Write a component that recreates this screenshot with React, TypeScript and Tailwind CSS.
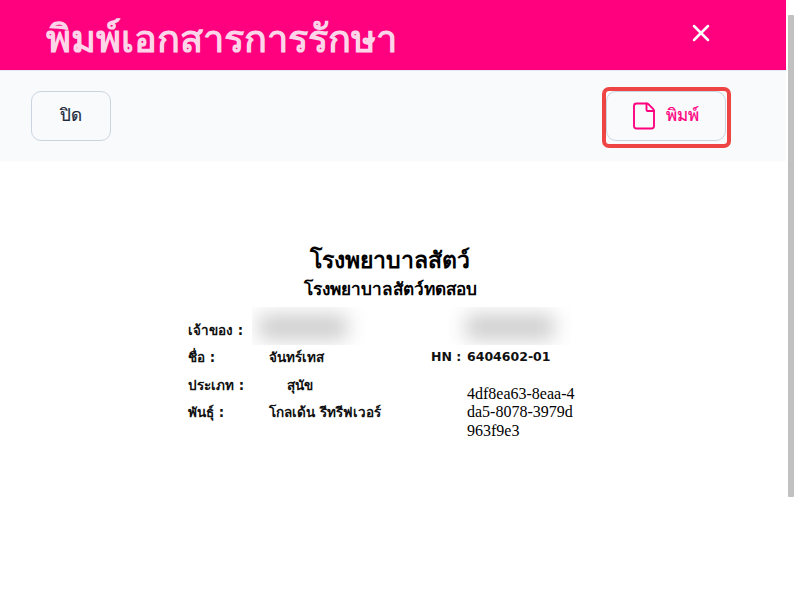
import { X, File } from "lucide-react";

const body = { fontFamily: "'DejaVu Sans', 'Noto Sans', sans-serif" };

function Row({ label, value, indent }: { label: string; value: string; indent?: boolean }) {
  return (
    <div className="flex items-start">
      <span className="w-[81px] shrink-0 font-bold">{label}</span>
      <span className={`font-bold ${indent ? "pl-[18px]" : ""}`}>{value}</span>
    </div>
  );
}

export default function App() {
  return (
    <div className="relative h-[594px] w-[796px] overflow-hidden bg-white" style={body}>
      {/* fake scrollbar */}
      <div className="absolute right-[2px] top-[15px] h-[482px] w-[6px] rounded-[1px] bg-[#c1c1c1]" />

      <div className="w-[786px]">
        <header className="flex h-[70px] items-center justify-between bg-[#ff007f] pl-[46px] pr-[71px]">
          <h1 className="pt-[9px] text-[38px] font-bold leading-[61px] text-[#fdd5e8]">พิมพ์เอกสารการรักษา</h1>
          <button className="mb-[4px] text-white">
            <X size={28} strokeWidth={2.2} />
          </button>
        </header>

        <div className="flex h-[91px] items-center justify-between border-t border-[#e2e8f0] bg-[#f8fafc] pl-[31px] pr-[55px]">
          <button className="h-[50px] w-[80px] rounded-[10px] border border-[#cbd5e1] text-[17px] font-medium text-[#1e293b] [-webkit-text-stroke:0.2px_#1e293b]">
            ปิด
          </button>
          <div className="mt-[16px] self-start rounded-[7px] border-[4px] border-[#ef4444] pb-[3px] pr-[1px]">
            <button className="flex h-[50px] w-[120px] items-center justify-center gap-[7px] rounded-[10px] border border-[#cbd5e1] pr-[4px] text-[17px] font-medium text-[#ff007f] [-webkit-text-stroke:0.2px_#ff007f]">
              <File size={30} strokeWidth={1.5} />
              พิมพ์
            </button>
          </div>
        </div>

        <main className="ml-[188px] w-[404px] pt-[86px] text-[#111]">
          <div className="text-center font-bold text-black">
            <div className="text-[23px] leading-[26px]">โรงพยาบาลสัตว์</div>
            <div className="pt-[1px] text-[17.2px] leading-[30px]">โรงพยาบาลสัตว์ทดสอบ</div>
          </div>

          <div className="mt-[3px] grid grid-cols-[243px_1fr] text-[13.5px]">
            <div>
              <div className="flex h-[38px] items-end">
                <span className="w-[64px] shrink-0 pb-[5px] font-bold leading-[20px]">เจ้าของ :</span>
                <div className="h-[38px] w-[128px] overflow-hidden bg-white">
                  <div className="ml-[7px] mt-[8px] h-[24px] w-[88px] bg-[#cbcbcb] blur-[10px]" />
                </div>
              </div>
              <div className="mt-[2px] flex flex-col gap-[7.5px] leading-[20px]">
                <Row label="ชื่อ :" value="จันทร์เทส" />
                <Row label="ประเภท :" value="สุนัข" indent />
                <Row label="พันธุ์ :" value="โกลเด้น รีทรีฟเวอร์" />
              </div>
            </div>

            <div>
              <div className="h-[38px] w-[141px] overflow-hidden bg-white pl-[19px]">
                <div className="ml-[16px] mt-[8px] h-[24px] w-[88px] bg-[#cbcbcb] blur-[10px]" />
              </div>
              <div className="mt-[2px] flex items-start text-[12.5px] leading-[20px]">
                <span className="w-[36px] shrink-0 font-bold">HN :</span>
                <span className="font-bold">6404602-01</span>
              </div>
              <div
                className="ml-[36px] mt-[18px] w-[112px] break-all text-[16px] leading-[18.4px] text-black"
                style={{ fontFamily: "'Liberation Serif', serif" }}
              >
                4df8ea63-8eaa-4da5-8078-3979d963f9e3
              </div>
            </div>
          </div>
        </main>
      </div>
    </div>
  );
}
